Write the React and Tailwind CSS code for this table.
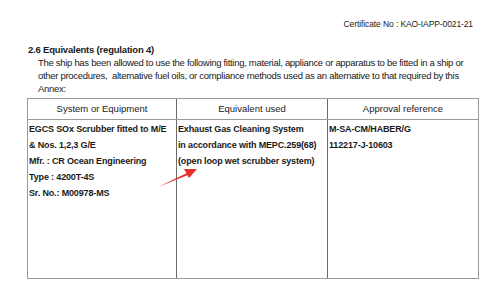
import React from 'react';

const rows1 = ['EGCS SOx Scrubber fitted to M/E', '& Nos. 1,2,3 G/E', 'Mfr. : CR Ocean Engineering', 'Type : 4200T-4S', 'Sr. No.: M00978-MS'];
const rows2 = ['Exhaust Gas Cleaning System', 'in accordance with MEPC.259(68)', '(open loop wet scrubber system)'];
const rows3 = ['M-SA-CM/HABER/G', '112217-J-10603'];

const Cell = ({ lines, className = '' }) => (
    <div className={`pt-[1px] pl-[1px] ${className}`}>
        {lines.map((l) => (
            <div key={l} className="h-[16px] leading-[16px] font-bold text-[9px] tracking-[-0.15px] whitespace-nowrap">{l}</div>
        ))}
    </div>
);

export default function App() {
    return (
        <div className="relative w-[495px] h-[291px] bg-white text-[#1a1a1a] overflow-hidden" style={{ fontFamily: '"Liberation Sans", Arial, sans-serif' }}>
            {/* certificate number */}
            <div className="pt-[18px] pr-[22px] text-right text-[8.5px] leading-[12px] tracking-[-0.1px]">Certificate No : KAO-IAPP-0021-21</div>

            <div className="pt-[14px] pl-[28px] font-bold text-[9.5px] leading-[12px] tracking-[-0.2px]">2.6 Equivalents (regulation 4)</div>
            <p className="pl-[38px] pr-[12px] text-[9.5px] leading-[13px] tracking-[-0.3px]">
                The ship has been allowed to use the following fitting, material, appliance or apparatus to be fitted in a ship or other procedures,&nbsp; alternative fuel oils, or compliance methods used as an alternative to that required by this Annex:
            </p>

            {/* table */}
            <div className="mt-[3px] ml-[27px] w-[452px] border border-[#9a9a9a]">
                <div className="grid grid-cols-[149px_151px_1fr] h-[21px] border-b border-[#9a9a9a] text-[9.5px] leading-[20px] text-center">
                    <div className="border-r border-[#6b6b6b]">System or Equipment</div>
                    <div className="border-r border-[#6b6b6b]">Equivalent used</div>
                    <div>Approval reference</div>
                </div>
                <div className="grid grid-cols-[149px_151px_1fr] h-[158px]">
                    <Cell lines={rows1} className="border-r border-[#6b6b6b]" />
                    <Cell lines={rows2} className="border-r border-[#6b6b6b]" />
                    <Cell lines={rows3} />
                </div>
            </div>

            {/* red arrow */}
            <svg className="absolute left-0 top-0" width="495" height="291" viewBox="0 0 495 291">
                <polygon points="158,187 187,173 188,175" fill="#e8302a" />
                <polygon points="197,169 184,169 189,178" fill="#e8302a" />
            </svg>
        </div>
    );
}
